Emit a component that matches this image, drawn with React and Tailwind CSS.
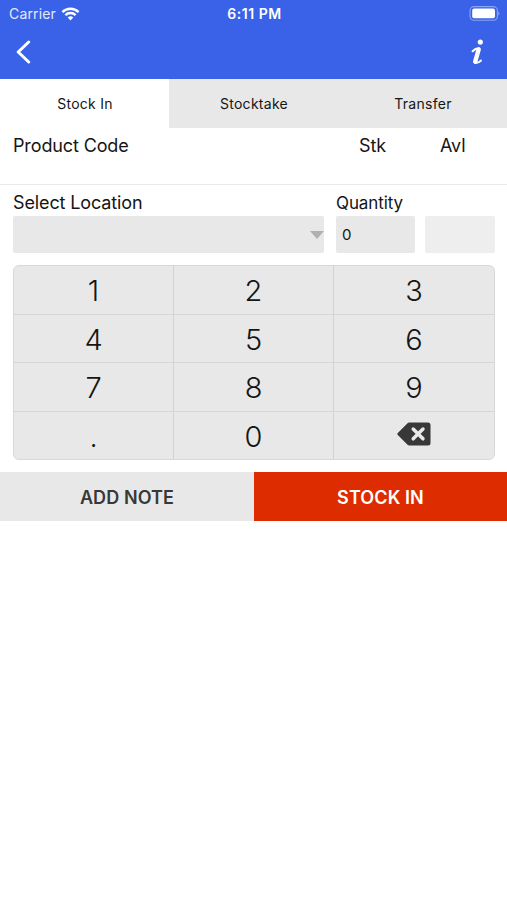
const tabs = ['Stock In', 'Stocktake', 'Transfer'];
const rows = [['1', '2', '3'], ['4', '5', '6'], ['7', '8', '9'], ['.', '0', 'del']];

function Wifi() {
  return (
    <svg className="ml-[5px] h-[14px] w-[19px]" viewBox="0 0 18 14" fill="none" stroke="#fff" strokeWidth="2.3">
      <path d="M.9 5.1a11.500 11.500 0 0 1 16.200 0" />
      <path d="M3.900 8.100a7.200 7.200 0 0 1 10.200 0" />
      <path d="M9 13.400 6.200 10.500a4 4 0 0 1 5.600 0Z" fill="#fff" stroke="none" />
    </svg>
  );
}

function Battery() {
  return (
    <svg className="h-[15px] w-[31px]" viewBox="0 0 31 15">
      <rect x="1" y=".6" width="27.4" height="13.6" rx="4" fill="none" stroke="#8ba3f3" strokeWidth="1.1" />
      <rect x="3.2" y="2.6" width="22.8" height="9.6" rx="2" fill="#fff" />
      <path d="M29.300 5.200c1.600.8 1.600 3.600 0 4.400Z" fill="#8ba3f3" />
    </svg>
  );
}

function InfoIcon() {
  return (
    <svg className="h-[26px] w-[13px]" viewBox="0 0 13 26" fill="none" stroke="#fff" strokeLinecap="round" strokeLinejoin="round">
      <circle cx="9.300" cy="3.100" r="2.600" fill="#fff" stroke="none" />
      <path d="M1.600 12.300C3.400 10.400 5.800 9.200 7.900 9.300" strokeWidth="2" />
      <path d="M7.700 10.400 4.200 22.600" strokeWidth="4.400" />
      <path d="M4 24c2.400.2 4.300-.6 6-2.500" strokeWidth="1.900" />
    </svg>
  );
}

function Backspace() {
  return (
    <svg className="-mt-[4px] h-[24px] w-[34px]" viewBox="0 0 34 24">
      <path d="M12.200.5H31a2.500 2.500 0 0 1 2.500 2.500v18a2.500 2.500 0 0 1-2.500 2.500H12.200a2.500 2.500 0 0 1-1.700-.8L.8 13.100a1.600 1.600 0 0 1 0-2.200L10.500 1.300a2.500 2.500 0 0 1 1.700-.8Z" fill="#383838" />
      <path d="m16.200 7 9.800 9.800m0-9.800-9.800 9.800" stroke="#e9e9e9" strokeWidth="3.500" strokeLinecap="round" />
    </svg>
  );
}

export default function App() {
  return (
    <div className="h-[900px] w-[507px] overflow-hidden bg-white font-['Inter',sans-serif] text-[#151515]">
      <header className="h-[79px] bg-[#3962e9] text-white">
        <div className="grid h-[27px] grid-cols-3 items-center pl-[9px] pr-[7px]">
          <div className="flex items-center text-[14px] tracking-[0.15px] text-[#e4eafd]">Carrier<Wifi /></div>
          <div className="text-center text-[14px] font-semibold tracking-[0.55px]">6:11 PM</div>
          <div className="flex justify-end"><Battery /></div>
        </div>
        <div className="flex h-[50px] items-center justify-between pl-[16px] pr-[23px]">
          <svg className="h-[24px] w-[15px]" viewBox="0 0 15 24" fill="none" stroke="#fff" strokeWidth="3" strokeLinecap="round" strokeLinejoin="round">
            <path d="M12.700 2 2.200 12l10.500 10" />
          </svg>
          <InfoIcon />
        </div>
      </header>

      <nav className="grid h-[49px] grid-cols-3 text-[14px]">
        {tabs.map((t, i) => (
          <div key={t} className={`flex items-center justify-center pl-[1px] tracking-[0.28px] ${i === 0 ? 'bg-white' : 'bg-[#e8e8e8]'}`}>{t}</div>
        ))}
      </nav>

      <div className="flex h-[57px] border-b border-[#e9e9e9] pl-[13px] pt-[5px] text-[18px] leading-[25px] tracking-[-0.13px]">
        <span className="w-[346px]">Product Code</span>
        <span className="w-[81px]">Stk</span>
        <span>Avl</span>
      </div>

      <section className="pl-[13px] pr-[12px] pt-[6px]">
        <div className="flex h-[25px] leading-[25px]">
          <span className="w-[323px] text-[18px] leading-[24px] tracking-[-0.13px]">Select Location</span>
          <span className="text-[17px] tracking-[-0.1px]">Quantity</span>
        </div>
        <div className="flex h-[37px]">
          <div className="flex w-[311px] items-center justify-end rounded-[2px] bg-[#e8e8e8]">
            <svg className="h-[8px] w-[14px]" viewBox="0 0 14 8"><path d="M0 0h14L7 8Z" fill="#b0b0b0" /></svg>
          </div>
          <div className="ml-[12px] flex w-[79px] items-center rounded-[2px] bg-[#e8e8e8] pl-[6px] pt-[2px] text-[15px]">0</div>
          <div className="ml-[10px] w-[70px] rounded-[2px] bg-[#eeeeee]" />
        </div>
        <div className="mt-[12px] flex h-[195px] flex-col divide-y divide-[#d6d6d6] overflow-hidden rounded-[6px] border border-[#d8d8d8] bg-[#e8e8e8]">
          {rows.map((row) => (
            <div key={row[0]} className="grid flex-1 grid-cols-3 divide-x divide-[#d2d2d2]">
              {row.map((k) => (
                <div key={k} className="flex items-center justify-center pt-[2px] text-[29px] font-light leading-none">
                  {k === 'del' ? <Backspace /> : k}
                </div>
              ))}
            </div>
          ))}
        </div>
      </section>

      <div className="mt-[12px] grid h-[49px] grid-cols-[254px_253px] text-[18px] font-semibold">
        <div className="flex items-center justify-center bg-[#e8e8e8] pt-px tracking-[0.1px] text-[#383838]">ADD NOTE</div>
        <div className="flex items-center justify-center bg-[#dc2c00] pt-px tracking-[0.1px] text-white">STOCK IN</div>
      </div>
    </div>
  );
}
